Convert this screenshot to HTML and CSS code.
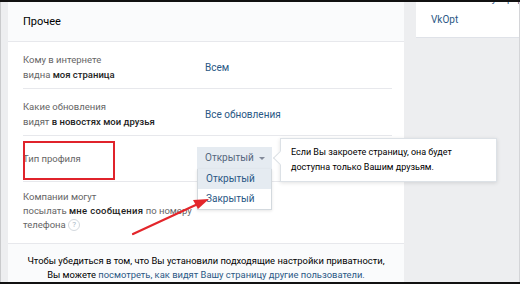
FILE: index.html
```html
<!DOCTYPE html>
<html lang="ru">
<head>
  <meta charset="UTF-8">
  <title>Приватность</title>
  <link rel="stylesheet" href="styles.css">
</head>
<body>

<div class="page">
  <!-- Main settings card -->
  <div class="main">
    <div class="card-head">Прочее</div>

    <div class="row">
      <div class="label">Кому в интернете<br>видна <b>моя страница</b></div>
      <div class="value"><a href="#">Всем</a></div>
    </div>

    <div class="row">
      <div class="label">Какие обновления<br>видят <b>в новостях мои друзья</b></div>
      <div class="value"><a href="#">Все обновления</a></div>
    </div>

    <div class="row row-type">
      <div class="label">Тип профиля</div>
      <div class="value select-wrap">
        <div class="select">Открытый <span class="caret"></span></div>
        <ul class="menu">
          <li class="active">Открытый</li>
          <li>Закрытый</li>
        </ul>
        <div class="tip">Если Вы закроете страницу, она будет<br>доступна только Вашим друзьям.</div>
      </div>
      <div class="mark"></div>
    </div>

    <div class="row row-last">
      <div class="label">Компании могут<br>посылать <b>мне сообщения</b> по номеру<br>телефона <span class="help">?</span></div>
    </div>

    <div class="card-foot">
      Чтобы убедиться в том, что Вы установили подходящие настройки приватности,<br>
      Вы можете <a href="#">посмотреть, как видят Вашу страницу другие пользователи.</a>
    </div>

    <svg class="arrow" width="90" height="50" viewBox="0 0 90 50">
      <line x1="5" y1="42" x2="72" y2="11" stroke="#e3262b" stroke-width="2.2" stroke-linecap="round"/>
      <polygon points="81,7 65,8 70,17" fill="#e3262b"/>
    </svg>
  </div>

  <!-- Right menu -->
  <div class="side">
    <div class="side-card">
      <div class="side-cut">Сменить тему оформления</div>
      <a href="#" class="side-link">VkOpt</a>
    </div>
  </div>
</div>

</body>
</html>
```

FILE: styles.css
```css
* {
  margin: 0;
  padding: 0;
  box-sizing: border-box;
}

body {
  font-family: Roboto, "Open Sans", sans-serif;
  font-size: 9.5px;
  color: #000;
  background: #edeef0;
  width: 520px;
  height: 284px;
  overflow: hidden;
  border-top: 2px solid #111;
  border-bottom: 2px solid #111;
}

a {
  color: #2a5885;
  text-decoration: none;
}

.page {
  display: flex;
  height: 280px;
  padding-left: 7px;
  border-left: 1px solid #c9cacc;
  border-right: 1px solid #d4d5d8;
}

/* Main card */
.main {
  position: relative;
  flex: 0 0 396px;
  background: #fff;
  display: flex;
  flex-direction: column;
}

.card-head {
  height: 40px;
  line-height: 39px;
  padding-left: 15px;
  font-size: 11px;
  background: #fafbfc;
  border-bottom: 1px solid #e7e8ec;
}

.row {
  position: relative;
  display: flex;
  margin: 0 12px 0 15px;
  padding: 10px 0 6px;
  line-height: 15px;
  border-bottom: 1px solid #e7e8ec;
}

.label {
  width: 182px;
  flex-shrink: 0;
  color: #656565;
}

.label b {
  font-weight: 500;
  color: #222;
}

.value {
  align-self: center;
  font-size: 10px;
}

.row-type {
  padding: 11px 0 12px;
  align-items: center;
}

.row-last {
  border-bottom: none;
  padding: 8px 0 11px;
  line-height: 14px;
}

.row-last .label {
  width: auto;
  white-space: nowrap;
}

.row-last b {
  letter-spacing: 0.3px;
}

.help {
  display: inline-block;
  width: 12px;
  height: 12px;
  line-height: 10px;
  border: 1px solid #d3d9de;
  border-radius: 50%;
  font-size: 8px;
  text-align: center;
  color: #aab7c4;
  vertical-align: middle;
}

/* Dropdown */
.select-wrap {
  position: relative;
  margin-left: -8px;
}

.select {
  width: 75px;
  height: 22px;
  line-height: 22px;
  padding-left: 8px;
  background: #e5ebf1;
  color: #55677d;
}

.caret {
  display: inline-block;
  margin-left: 3px;
  border-left: 3px solid transparent;
  border-right: 3px solid transparent;
  border-top: 3px solid #828a99;
  vertical-align: middle;
}

.menu {
  position: absolute;
  top: 22px;
  left: 0;
  width: 75px;
  list-style: none;
  background: #fff;
  border: 1px solid #d3d9de;
  border-top: none;
  box-shadow: 0 1px 3px rgba(0, 0, 0, 0.1);
  z-index: 2;
}

.menu li {
  height: 20px;
  line-height: 20px;
  padding-left: 8px;
  color: #2a5885;
}

.menu li.active {
  background: #e5ebf1;
}

.tip {
  position: absolute;
  top: -9px;
  left: 83px;
  width: 217px;
  padding: 6px 10px;
  line-height: 15px;
  font-size: 9px;
  background: #fff;
  border: 1px solid #dce1e6;
  box-shadow: 0 1px 4px rgba(0, 0, 0, 0.12);
  white-space: nowrap;
  z-index: 3;
}

.tip::before {
  content: "";
  position: absolute;
  left: -6px;
  top: 14px;
  width: 9px;
  height: 9px;
  background: #fff;
  border-left: 1px solid #dce1e6;
  border-bottom: 1px solid #dce1e6;
  transform: rotate(45deg);
}

.mark {
  position: absolute;
  left: 0;
  top: 5px;
  width: 92px;
  height: 39px;
  border: 2px solid #e0232b;
}

/* Footer */
.card-foot {
  margin-top: auto;
  height: 39px;
  padding-top: 10px;
  line-height: 14px;
  font-size: 9.4px;
  text-align: center;
  white-space: nowrap;
  background: #fafbfc;
  border-top: 1px solid #e7e8ec;
}

.arrow {
  position: absolute;
  left: 120px;
  top: 190px;
  z-index: 4;
}

/* Right column */
.side {
  margin-left: 12px;
  flex: 1;
  min-width: 0;
}

.side-card {
  height: 36px;
  background: #fff;
  overflow: hidden;
  padding-left: 15px;
  border-bottom: 1px solid #dfe2e8;
}

.side-cut {
  margin-top: -9px;
  line-height: 12px;
  font-size: 10px;
  color: #2a5885;
  white-space: nowrap;
}

.side-link {
  display: block;
  margin-top: 9px;
  font-size: 10px;
}
```
